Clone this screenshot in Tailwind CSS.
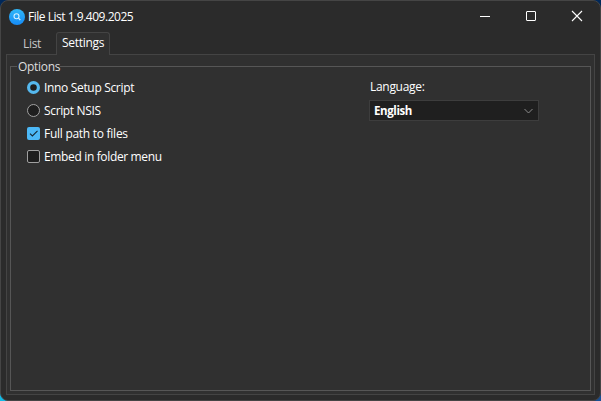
<!DOCTYPE html>
<html lang="en">
<head>
<meta charset="utf-8">
<title>File List</title>
<script src="https://cdn.jsdelivr.net/npm/@tailwindcss/browser@4"></script>
</head>
<body class="h-[401px] w-[601px] overflow-hidden bg-[conic-gradient(#00285a_25%,#174f95_0_50%,#12b9e5_0_75%,#00285a_0)] font-['Open_Sans','Noto_Sans',sans-serif] text-[12px] leading-4 text-white">
<main class="flex h-full w-full flex-col rounded-lg border border-[#454545] bg-[#2b2b2b] px-[5px] pb-[5px]">
  <header class="flex h-[31px] shrink-0 items-center pl-[3px]">
    <svg class="size-4 shrink-0" viewBox="0 0 16 16" fill="none">
      <defs><linearGradient id="g" x1="0" y1="0" x2="0" y2="1"><stop stop-color="#30b8f8"/><stop offset="1" stop-color="#168bf6"/></linearGradient></defs>
      <circle cx="8" cy="8" r="8" fill="url(#g)"/>
      <circle cx="7.5" cy="7.2" r="2.5" stroke="#d5f1ff" stroke-width="1.1"/>
      <path d="M9.4 9.1 11.3 11" stroke="#d5f1ff" stroke-width="1.2"/>
    </svg>
    <h1 class="ml-[3px] tracking-[-0.48px] whitespace-nowrap">File List 1.9.409.2025</h1>
    <div class="mr-[2px] ml-auto flex">
      <svg class="h-[31px] w-[46px]" viewBox="0 0 46 31" stroke="#fff"><path d="M18 15.5h10"/></svg>
      <svg class="h-[31px] w-[46px]" viewBox="0 0 46 31" fill="none" stroke="#fff"><rect x="18.5" y="10.5" width="9" height="9" rx=".5"/></svg>
      <svg class="h-[31px] w-[39px]" viewBox="0 0 39 31" stroke="#fff" stroke-width="1.1"><path d="M18 10l10 10M28 10l-10 10"/></svg>
    </div>
  </header>
  <nav class="z-10 -mb-px flex h-[23px] shrink-0">
    <div class="w-[50px] pt-[4px] pl-[17px] tracking-[-0.3px] text-[#c8c8c8]">List</div>
    <div class="w-[54px] rounded-t-[3px] border border-b-0 border-[#444] bg-[#303030] pt-[2px] pl-[5px] tracking-[-0.3px] whitespace-nowrap">Settings</div>
  </nav>
  <section class="flex flex-1 flex-col border border-[#444] bg-[#303030] px-[3px] pb-[3px]">
    <div class="flex h-[19px] shrink-0 items-end">
      <i class="h-2 w-[7px] border-t border-l border-[#565656]"></i>
      <span class="-mb-px h-[16px] w-[43px] pl-px tracking-[-0.3px] text-[#ddd]">Options</span>
      <i class="h-2 flex-1 border-t border-r border-[#565656]"></i>
    </div>
    <div class="flex flex-1 border border-t-0 border-[#565656] pl-4">
      <div class="flex w-[343px] flex-col gap-[7px] pt-[6px]">
        <label class="flex items-start gap-1"><svg class="mt-px size-[13px]" viewBox="0 0 13 13"><circle cx="6.5" cy="6.5" r="4.9" fill="#1e1e1e" stroke="#55b8ee" stroke-width="3.2"/></svg><span class="tracking-[-0.33px]">Inno Setup Script</span></label>
        <label class="flex items-start gap-1"><svg class="mt-px size-[13px]" viewBox="0 0 13 13"><circle cx="6.5" cy="6.5" r="6" fill="#1e1e1e" stroke="#a0a0a0"/></svg><span class="tracking-[-0.35px]">Script NSIS</span></label>
        <label class="flex items-start gap-1"><svg class="mt-px size-[13px]" viewBox="0 0 13 13"><rect width="13" height="13" rx="2" fill="#4cb8f6"/><path d="M3 6.6 5.4 9 10.5 3.9" fill="none" stroke="#142834" stroke-width="1.1"/></svg><span class="tracking-[-0.27px]">Full path to files</span></label>
        <label class="flex items-start gap-1"><svg class="mt-px size-[13px]" viewBox="0 0 13 13"><rect x=".5" y=".5" width="12" height="12" rx="1.5" fill="#1e1e1e" stroke="#a0a0a0"/></svg><span class="tracking-[-0.35px]">Embed in folder menu</span></label>
      </div>
      <div class="pt-[5px]">
        <div class="tracking-[-0.3px]">Language:</div>
        <div class="mt-[5px] -ml-px flex h-[21px] w-[170px] items-center justify-between border border-[#3d3d3d] bg-[#1f1f1f] pr-[5px] pl-[4px]">
          <span class="text-[11.5px] font-bold tracking-[-0.4px]">English</span>
          <svg class="h-[6px] w-[9px]" viewBox="0 0 9 6" fill="none" stroke="#8c8c8c"><path d="M.5 1 4.5 5l4-4"/></svg>
        </div>
      </div>
    </div>
  </section>
</main>
</body>
</html>
